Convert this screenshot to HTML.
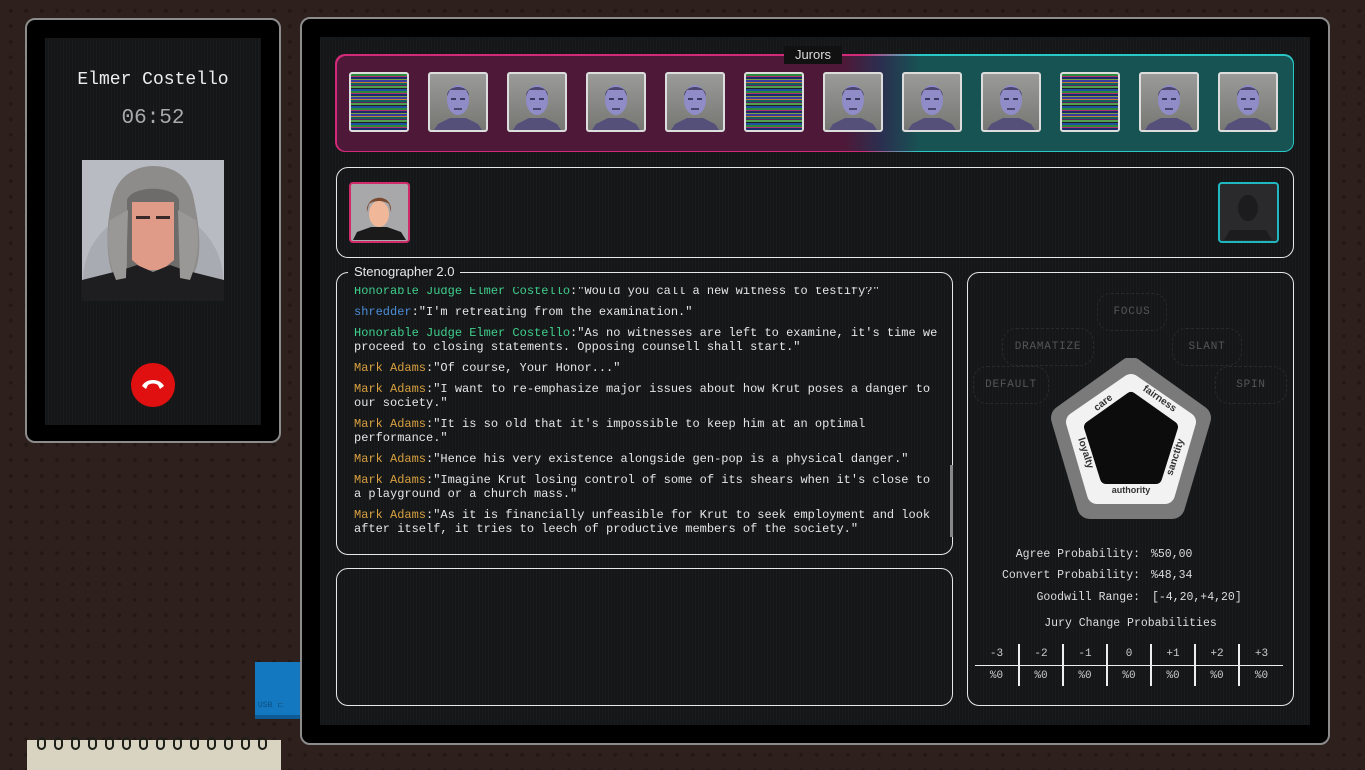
<!DOCTYPE html>
<html><head><meta charset="utf-8"><style>
*{margin:0;padding:0;box-sizing:border-box}
body{width:1365px;height:767px;overflow:hidden;position:relative;background-color:#2d201d;background-image:radial-gradient(circle,#231816 1.6px,transparent 2.2px);background-size:15.5px 15.5px;background-position:3px 3px;font-family:"Liberation Mono",monospace}
.a{position:absolute}
.scr{background:#151617;background-image:repeating-linear-gradient(90deg,rgba(255,255,255,0.025) 0 1px,transparent 1px 3px)}
.m{font-family:"Liberation Mono",monospace;font-size:12px;color:#e6e6e6}
.s{font-family:"Liberation Sans",sans-serif}
.panel{border:1.5px solid #e8e8e8;border-radius:12px}
.tile{width:60px;height:60px;border:2px solid #ddd;border-radius:3px;background:linear-gradient(#9a9a98,#777774);overflow:hidden}
.gl{background:repeating-linear-gradient(180deg,#2a8a3a 0 2px,#b03070 2px 3px,#1a2a6a 3px 5px,#7aa040 5px 6px,#3a3aa0 6px 8px,#c08030 8px 9px,#106060 9px 11px,#602060 11px 12px,#50a050 12px 14px,#202020 14px 15px,#2050a0 15px 17px)}
.log p{margin-bottom:7px;line-height:14px;white-space:nowrap}
.g{color:#3fcf8e}.b{color:#4a8ed8}.o{color:#d8a040}
.hx{position:absolute;border:1px dashed #2a2a2a;border-radius:14px;color:#555;font-size:11px;letter-spacing:0.8px;text-align:center;line-height:36px;height:38px}
table{border-collapse:collapse}
td{width:44px;text-align:center;color:#ccc;font-size:11px;height:21px}
.ring{position:absolute;top:737px;width:9px;height:13px;border:2.5px solid #1e1e18;border-radius:5px}
</style></head><body>
<div class="a" style="left:25px;top:18px;width:256px;height:425px;background:#000;border:2px solid #8c8c8c;border-radius:10px"></div>
<div class="a scr" style="left:45px;top:38px;width:216px;height:387px"></div>
<div class="a m" style="left:45px;top:70px;width:216px;text-align:center;font-size:18px;color:#eee">Elmer Costello</div>
<div class="a m" style="left:45px;top:107px;width:216px;text-align:center;font-size:21px;color:#aaa">06:52</div>
<svg class="a" style="left:82px;top:160px" width="142" height="141" viewBox="0 0 142 141">
<rect width="142" height="141" fill="#b8bcc2"/><ellipse cx="71" cy="120" rx="70" ry="70" fill="#a8acb2"/>
<path d="M40 130 C20 110 25 60 30 40 C35 15 55 6 71 6 C90 6 108 15 112 40 C118 70 124 110 100 130Z" fill="#8e8c8a"/>
<path d="M45 40 C50 25 92 25 97 40 L98 110 L45 110Z" fill="#6e6c6a"/>
<path d="M50 42 L92 42 L92 100 L80 110 L62 110 L50 100Z" fill="#e09a88"/>
<rect x="54" y="56" width="14" height="3" fill="#3a2a2a"/><rect x="74" y="56" width="14" height="3" fill="#3a2a2a"/>
<path d="M0 141 L0 120 L40 110 L55 105 L71 112 L88 105 L102 110 L142 120 L142 141Z" fill="#1e1e20"/>
<path d="M28 60 C24 80 26 100 34 120 L44 118 L46 50Z M114 60 C118 80 116 100 108 120 L98 118 L96 50Z" fill="#9a9896"/>
</svg>
<div class="a" style="left:131px;top:363px;width:44px;height:44px;border-radius:50%;background:#e01010"></div>
<svg class="a" style="left:140px;top:374px" width="26" height="20" viewBox="0 0 26 20"><path d="M2 12 C6 4 20 4 24 12 L20 15 L18 11 C15 9 11 9 8 11 L6 15Z" fill="#fff"/></svg>
<div class="a" style="left:255px;top:662px;width:45px;height:57px;background:#1478c0;border-bottom:4px solid #0d5a94"></div>
<div class="a" style="left:258px;top:700px;font-size:8px;color:#0d4f80">USB ⊏</div>
<div class="a" style="left:27px;top:740px;width:254px;height:30px;background:#d9d4c2"></div>
<div id="rings"></div>
<div class="a" style="left:300px;top:17px;width:1030px;height:728px;background:#000;border:2px solid #8c8c8c;border-radius:10px"></div>
<div class="a scr" style="left:320px;top:37px;width:990px;height:688px"></div>
<div class="a" style="left:335px;top:54px;width:959px;height:98px;border-radius:10px;background:linear-gradient(90deg,#d02a78 0 55%,#28c8c8 61% 100%)"></div>
<div class="a" style="left:336.5px;top:55.5px;width:956px;height:95px;border-radius:9px;background:linear-gradient(90deg,#4e1838 0%,#4e1838 53%,#2a3050 57%,#175353 61%,#175353 100%)"></div>
<div class="a s" style="left:784px;top:46px;width:58px;height:18px;background:#111;color:#ddd;font-size:13px;text-align:center;line-height:18px">Jurors</div>
<div id="tiles"></div>
<div class="a panel" style="left:336px;top:167px;width:958px;height:91px"></div>
<svg class="a" style="left:349px;top:182px" width="61" height="61" viewBox="0 0 61 61"><rect x="1" y="1" width="59" height="59" rx="3" fill="#a8a8aa" stroke="#d02a6a" stroke-width="2"/><path d="M4 58 L8 50 L22 45 L38 45 L52 50 L57 58Z" fill="#1a1a1a"/><ellipse cx="30" cy="32" rx="10" ry="13" fill="#f0b898"/><path d="M18 30 C16 12 44 10 42 30 L40 22 C35 18 25 18 20 22Z" fill="#7a4a30"/></svg>
<svg class="a" style="left:1218px;top:182px" width="61" height="61" viewBox="0 0 61 61"><rect x="1" y="1" width="59" height="59" rx="3" fill="#2a2a2c" stroke="#20b8c0" stroke-width="2"/><ellipse cx="30" cy="26" rx="10" ry="13" fill="#1c1c1e"/><path d="M6 58 L12 48 L48 48 L54 58Z" fill="#1c1c1e"/></svg>
<div class="a panel" style="left:336px;top:272px;width:617px;height:283px"></div>
<div class="a s" style="left:348px;top:264px;background:#151617;padding:0 6px;color:#e8e8e8;font-size:13px">Stenographer 2.0</div>
<div class="a" style="left:950px;top:465px;width:3px;height:72px;background:#888"></div>
<div class="a" style="left:354px;top:287px;width:594px;height:260px;overflow:hidden">
<div class="m log" style="margin-top:-3px">
<p><span class="g">Honorable Judge Elmer Costello</span>:"Would you call a new witness to testify?"</p>
<p><span class="b">shredder</span>:"I'm retreating from the examination."</p>
<p><span class="g">Honorable Judge Elmer Costello</span>:"As no witnesses are left to examine, it's time we<br>proceed to closing statements. Opposing counsell shall start."</p>
<p><span class="o">Mark Adams</span>:"Of course, Your Honor..."</p>
<p><span class="o">Mark Adams</span>:"I want to re-emphasize major issues about how Krut poses a danger to<br>our society."</p>
<p><span class="o">Mark Adams</span>:"It is so old that it's impossible to keep him at an optimal<br>performance."</p>
<p><span class="o">Mark Adams</span>:"Hence his very existence alongside gen-pop is a physical danger."</p>
<p><span class="o">Mark Adams</span>:"Imagine Krut losing control of some of its shears when it's close to<br>a playground or a church mass."</p>
<p><span class="o">Mark Adams</span>:"As it is financially unfeasible for Krut to seek employment and look<br>after itself, it tries to leech of productive members of the society."</p>
</div></div>
<div class="a panel" style="left:336px;top:568px;width:617px;height:138px"></div>
<div class="a panel" style="left:967px;top:272px;width:327px;height:434px"></div>
<div class="a m hx" style="left:1097px;top:293px;width:70px">FOCUS</div>
<div class="a m hx" style="left:1002px;top:328px;width:92px">DRAMATIZE</div>
<div class="a m hx" style="left:1172px;top:328px;width:70px">SLANT</div>
<div class="a m hx" style="left:973px;top:366px;width:76px">DEFAULT</div>
<div class="a m hx" style="left:1215px;top:366px;width:72px">SPIN</div>
<svg class="a" style="left:1050px;top:358px" width="162" height="162" viewBox="0 0 162 162">
<path d="M81 12 L148 60 L122 148 L40 148 L14 60Z" fill="#7a7a7a" stroke="#7a7a7a" stroke-width="26" stroke-linejoin="round"/>
<path d="M81 26 L136 64 L115 136 L47 136 L26 64Z" fill="#f2f2f2" stroke="#f2f2f2" stroke-width="20" stroke-linejoin="round"/>
<path d="M81 40 L122 69 L106 120 L56 120 L40 69Z" fill="#0c0c0c" stroke="#0c0c0c" stroke-width="12" stroke-linejoin="round"/>
<g font-family="Liberation Sans,sans-serif" font-size="10" fill="#333" text-anchor="middle" font-weight="bold">
<text transform="translate(55,47) rotate(-38)">care</text>
<text transform="translate(108,43) rotate(35)">fairness</text>
<text transform="translate(128,100) rotate(-72)">sanctity</text>
<text transform="translate(33,96) rotate(72)">loyalty</text>
<text x="81" y="135" font-size="9">authority</text></g></svg>
<div class="a m" style="left:975px;top:548px;width:165px;text-align:right;color:#ddd;font-size:11.5px">Agree Probability:</div>
<div class="a m" style="left:1151px;top:548px;color:#ddd;font-size:11.5px">%50,00</div>
<div class="a m" style="left:975px;top:569px;width:165px;text-align:right;color:#ddd;font-size:11.5px">Convert Probability:</div>
<div class="a m" style="left:1151px;top:569px;color:#ddd;font-size:11.5px">%48,34</div>
<div class="a m" style="left:975px;top:591px;width:165px;text-align:right;color:#ddd;font-size:11.5px">Goodwill Range:</div>
<div class="a m" style="left:1152px;top:591px;color:#ddd;font-size:11.5px">[-4,20,+4,20]</div>
<div class="a m" style="left:967px;top:617px;width:327px;text-align:center;color:#ddd;font-size:11.5px">Jury Change Probabilities</div>
<table class="a m" style="left:975px;top:644px">
<tr style="border-bottom:1.5px solid #eee"><td>-3</td><td style="border-left:2px solid #eee">-2</td><td style="border-left:2px solid #eee">-1</td><td style="border-left:2px solid #eee">0</td><td style="border-left:2px solid #eee">+1</td><td style="border-left:2px solid #eee">+2</td><td style="border-left:2px solid #eee">+3</td></tr>
<tr><td>%0</td><td style="border-left:2px solid #eee">%0</td><td style="border-left:2px solid #eee">%0</td><td style="border-left:2px solid #eee">%0</td><td style="border-left:2px solid #eee">%0</td><td style="border-left:2px solid #eee">%0</td><td style="border-left:2px solid #eee">%0</td></tr></table>
<script>
var xs=[349,428,507,586,665,744,823,902,981,1060,1139,1218],gl=[0,5,9],h='';
xs.forEach(function(x,i){
if(gl.indexOf(i)>=0){h+='<div class="a tile gl" style="left:'+x+'px;top:72px"></div>';}
else{h+='<div class="a tile" style="left:'+x+'px;top:72px"><svg width="56" height="56" viewBox="0 0 56 56"><path d="M4 56 L8 50 L20 44 L36 44 L48 50 L52 56Z" fill="#55507a"/><ellipse cx="28" cy="26" rx="11" ry="15" fill="#8f8cc8"/><path d="M17 22 C17 10 39 10 39 22 L36 16 L20 16Z" fill="#4a4670"/><rect x="21" y="24" width="5" height="2" fill="#3a3660"/><rect x="30" y="24" width="5" height="2" fill="#3a3660"/><rect x="24" y="34" width="8" height="2" fill="#4a4670"/></svg></div>';}
});
document.getElementById('tiles').innerHTML=h;
var r='';for(var k=0;k<14;k++){r+='<div class="ring" style="left:'+(37+k*17)+'px"></div>';}
document.getElementById('rings').innerHTML=r;
</script>
</body></html>
